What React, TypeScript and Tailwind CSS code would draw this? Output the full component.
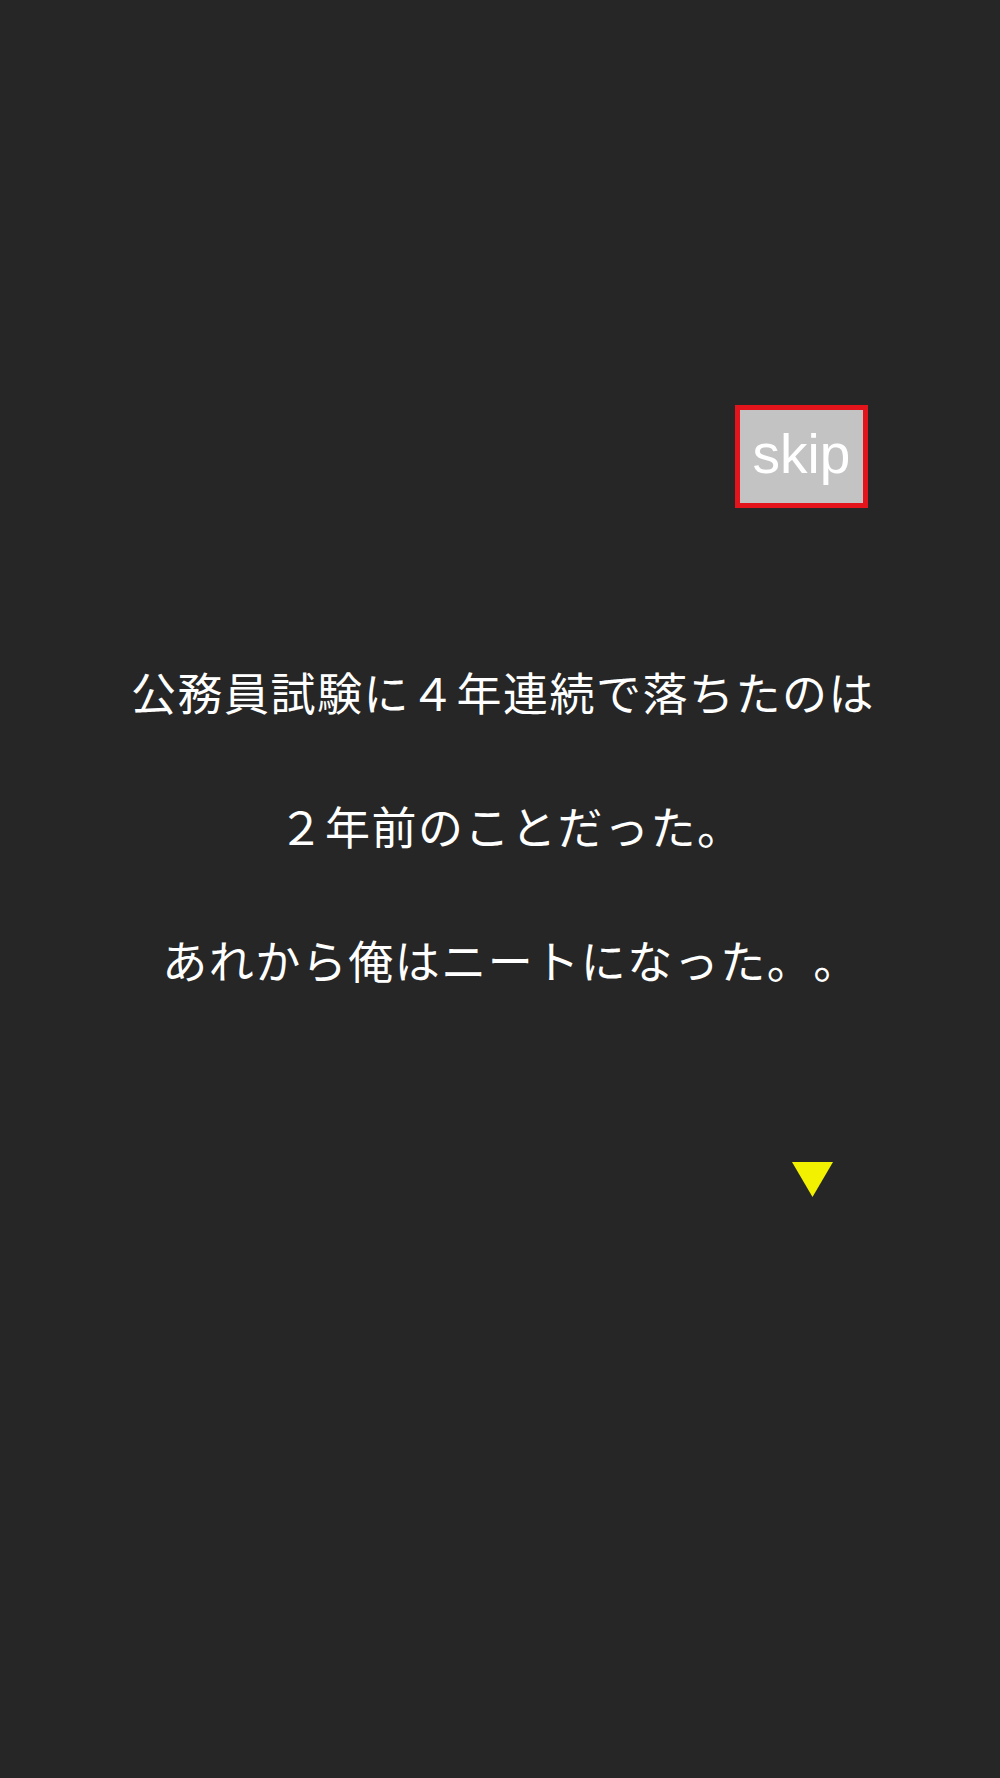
export default function App() {
  const lines = [
    { text: "公務員試験に４年連続で落ちたのは", pad: "pl-[6px]" },
    { text: "２年前のことだった。", pad: "pl-[22px]" },
    { text: "あれから俺はニートになった。。", pad: "pl-[22px]" },
  ];
  return (
    <div className="min-h-[1778px] bg-[#262626] flex flex-col">
      <div className="pt-[405px] pr-[132px] flex justify-end">
        <div className="w-[133px] h-[103px] border-[5px] border-[#e3141b] bg-[#c3c3c3] flex items-center justify-center text-white text-[55px] leading-none pb-[4px] font-['Liberation_Sans',Arial,sans-serif]">
          skip
        </div>
      </div>
      <div className="mt-[117px] flex flex-col items-center text-white text-[45px] tracking-[1.5px] leading-[134px] [text-spacing-trim:space-all] font-['Noto_Sans_CJK_JP',sans-serif]">
        {lines.map((l) => (
          <p key={l.text} className={l.pad}>
            {l.text}
          </p>
        ))}
      </div>
      <div className="mt-[135px] pr-[167px] flex justify-end">
        <svg width="41" height="35" viewBox="0 0 41 35">
          <polygon points="0,0 41,0 20.5,35" fill="#f2f200" />
        </svg>
      </div>
    </div>
  );
}
